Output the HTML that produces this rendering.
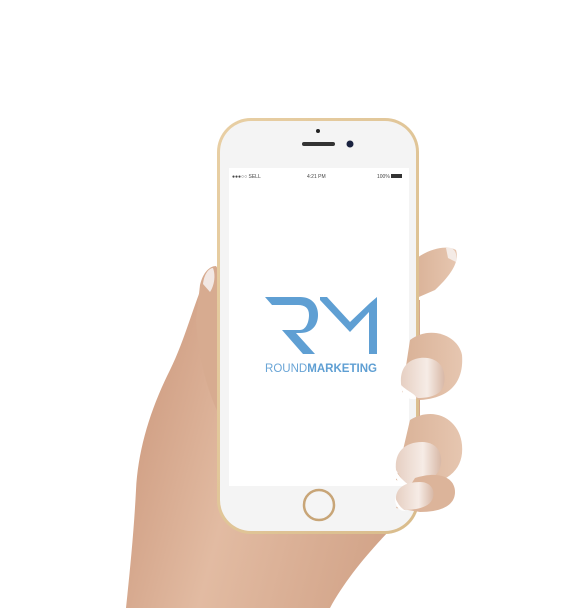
<!DOCTYPE html>
<html><head><meta charset="utf-8"><style>
html,body{margin:0;padding:0;background:#fff;width:585px;height:608px;overflow:hidden;font-family:"Liberation Sans",sans-serif}
</style></head><body>
<svg width="585" height="608" viewBox="0 0 585 608" xmlns="http://www.w3.org/2000/svg">
<defs>
<linearGradient id="sk" x1="0" y1="0" x2="1" y2="0.3">
<stop offset="0" stop-color="#c99478"/><stop offset="0.5" stop-color="#e2bba2"/><stop offset="1" stop-color="#d3a58a"/></linearGradient>
<linearGradient id="fg" x1="0" y1="0" x2="1" y2="0">
<stop offset="0" stop-color="#d9b196"/><stop offset="1" stop-color="#e6c6b0"/></linearGradient>
<linearGradient id="nl" x1="0" y1="0" x2="1" y2="0">
<stop offset="0" stop-color="#e6cfc2"/><stop offset="0.6" stop-color="#f6ece6"/><stop offset="1" stop-color="#d8b8a6"/></linearGradient>
<linearGradient id="gold" x1="0" y1="0" x2="1" y2="1">
<stop offset="0" stop-color="#e8cfa4"/><stop offset="1" stop-color="#d9bc8c"/></linearGradient>
</defs>
<!-- hand body -->
<path d="M205,280 C195,300 185,340 170,370 C150,410 138,450 136,490 C134,530 130,570 126,608 L330,608 C345,580 370,550 395,525 L420,505 L420,300 Z" fill="url(#sk)"/>
<!-- thumb -->
<path d="M200,285 C203,272 210,266 216,266 L222,275 L222,420 C210,400 198,360 196,320 Z" fill="#d7ab90"/>
<path d="M203,284 C204,274 209,268 213,268 C216,276 214,286 210,292 Z" fill="#f2e8e4"/>
<!-- index finger (behind phone) -->
<path d="M412,262 C425,250 445,244 456,250 C460,262 450,276 435,290 L412,300 Z" fill="url(#fg)"/>
<path d="M446,248 C453,246 458,252 456,262 L448,258 Z" fill="#f4ebe6"/>
<!-- phone body -->
<rect x="217" y="118" width="202" height="416" rx="34" fill="url(#gold)"/>
<rect x="220" y="121" width="196" height="410" rx="31" fill="#f4f4f4"/>
<rect x="229" y="168" width="180" height="318" fill="#fff"/>
<circle cx="318" cy="131" r="2" fill="#222"/>
<rect x="302" y="142" width="33" height="4" rx="2" fill="#333"/>
<circle cx="350" cy="144" r="3.5" fill="#1a2340"/>
<circle cx="319" cy="505" r="15" fill="none" stroke="#c8a577" stroke-width="2.5"/>
<circle cx="319" cy="505" r="13" fill="#f5f5f5"/>
<!-- status bar -->
<text x="232" y="178" font-size="5" fill="#444" font-family="Liberation Sans">●●●○○ SELL</text>
<text x="307" y="178" font-size="5" fill="#444" font-family="Liberation Sans">4:21 PM</text>
<text x="377" y="178" font-size="5" fill="#444" font-family="Liberation Sans">100%</text>
<rect x="391" y="174" width="11" height="4" fill="#333"/>
<!-- logo -->
<g fill="#5f9fd3">
<path d="M265,297 L300,297 C312,297 318,305 318,315 C318,325 312,333 300,333 L296,333 L315,354 L303,354 L282,330 L300,330 C306,330 309,322 309,315 C309,308 305,305 298,305 L272,305 Z"/>
<path d="M320,297 L327,297 L350,322 L370,303 L377,297 L377,354 L369,354 L369,312 L350,332 L320,300 Z"/>
</g>
<text x="265" y="372" font-size="12" fill="#6aa5d6" font-family="Liberation Sans" textLength="112" lengthAdjust="spacingAndGlyphs">ROUND<tspan font-weight="bold" fill="#5f9fd3">MARKETING</tspan></text>
<!-- fingers over phone -->
<path d="M410,340 C430,325 458,335 462,355 C464,380 452,398 420,400 L402,392 Z" fill="url(#fg)"/>
<path d="M402,390 C398,372 405,360 420,358 C438,356 447,368 444,384 C442,395 430,398 418,398 Z" fill="url(#nl)"/>
<path d="M401,385 C408,392 418,395 416,399 C408,400 402,396 401,385 Z" fill="#fff"/>
<path d="M410,420 C435,405 460,420 462,445 C464,468 450,482 420,486 L396,480 Z" fill="url(#fg)"/>
<path d="M396,470 C394,452 405,442 422,442 C438,442 444,455 440,468 C436,480 420,484 405,484 Z" fill="url(#nl)"/>
<path d="M394,466 C398,478 408,484 410,486 C400,486 394,480 394,466 Z" fill="#fff"/>
<path d="M415,478 C440,470 455,478 455,492 C455,505 442,512 420,512 L396,508 Z" fill="#dcb49a"/>
<path d="M396,500 C395,488 405,482 420,482 C432,482 436,492 432,500 C428,508 415,510 402,510 Z" fill="url(#nl)"/>
<path d="M395,497 C398,506 404,510 406,511 C398,511 395,506 395,497 Z" fill="#fff"/>
</svg>
</body></html>
